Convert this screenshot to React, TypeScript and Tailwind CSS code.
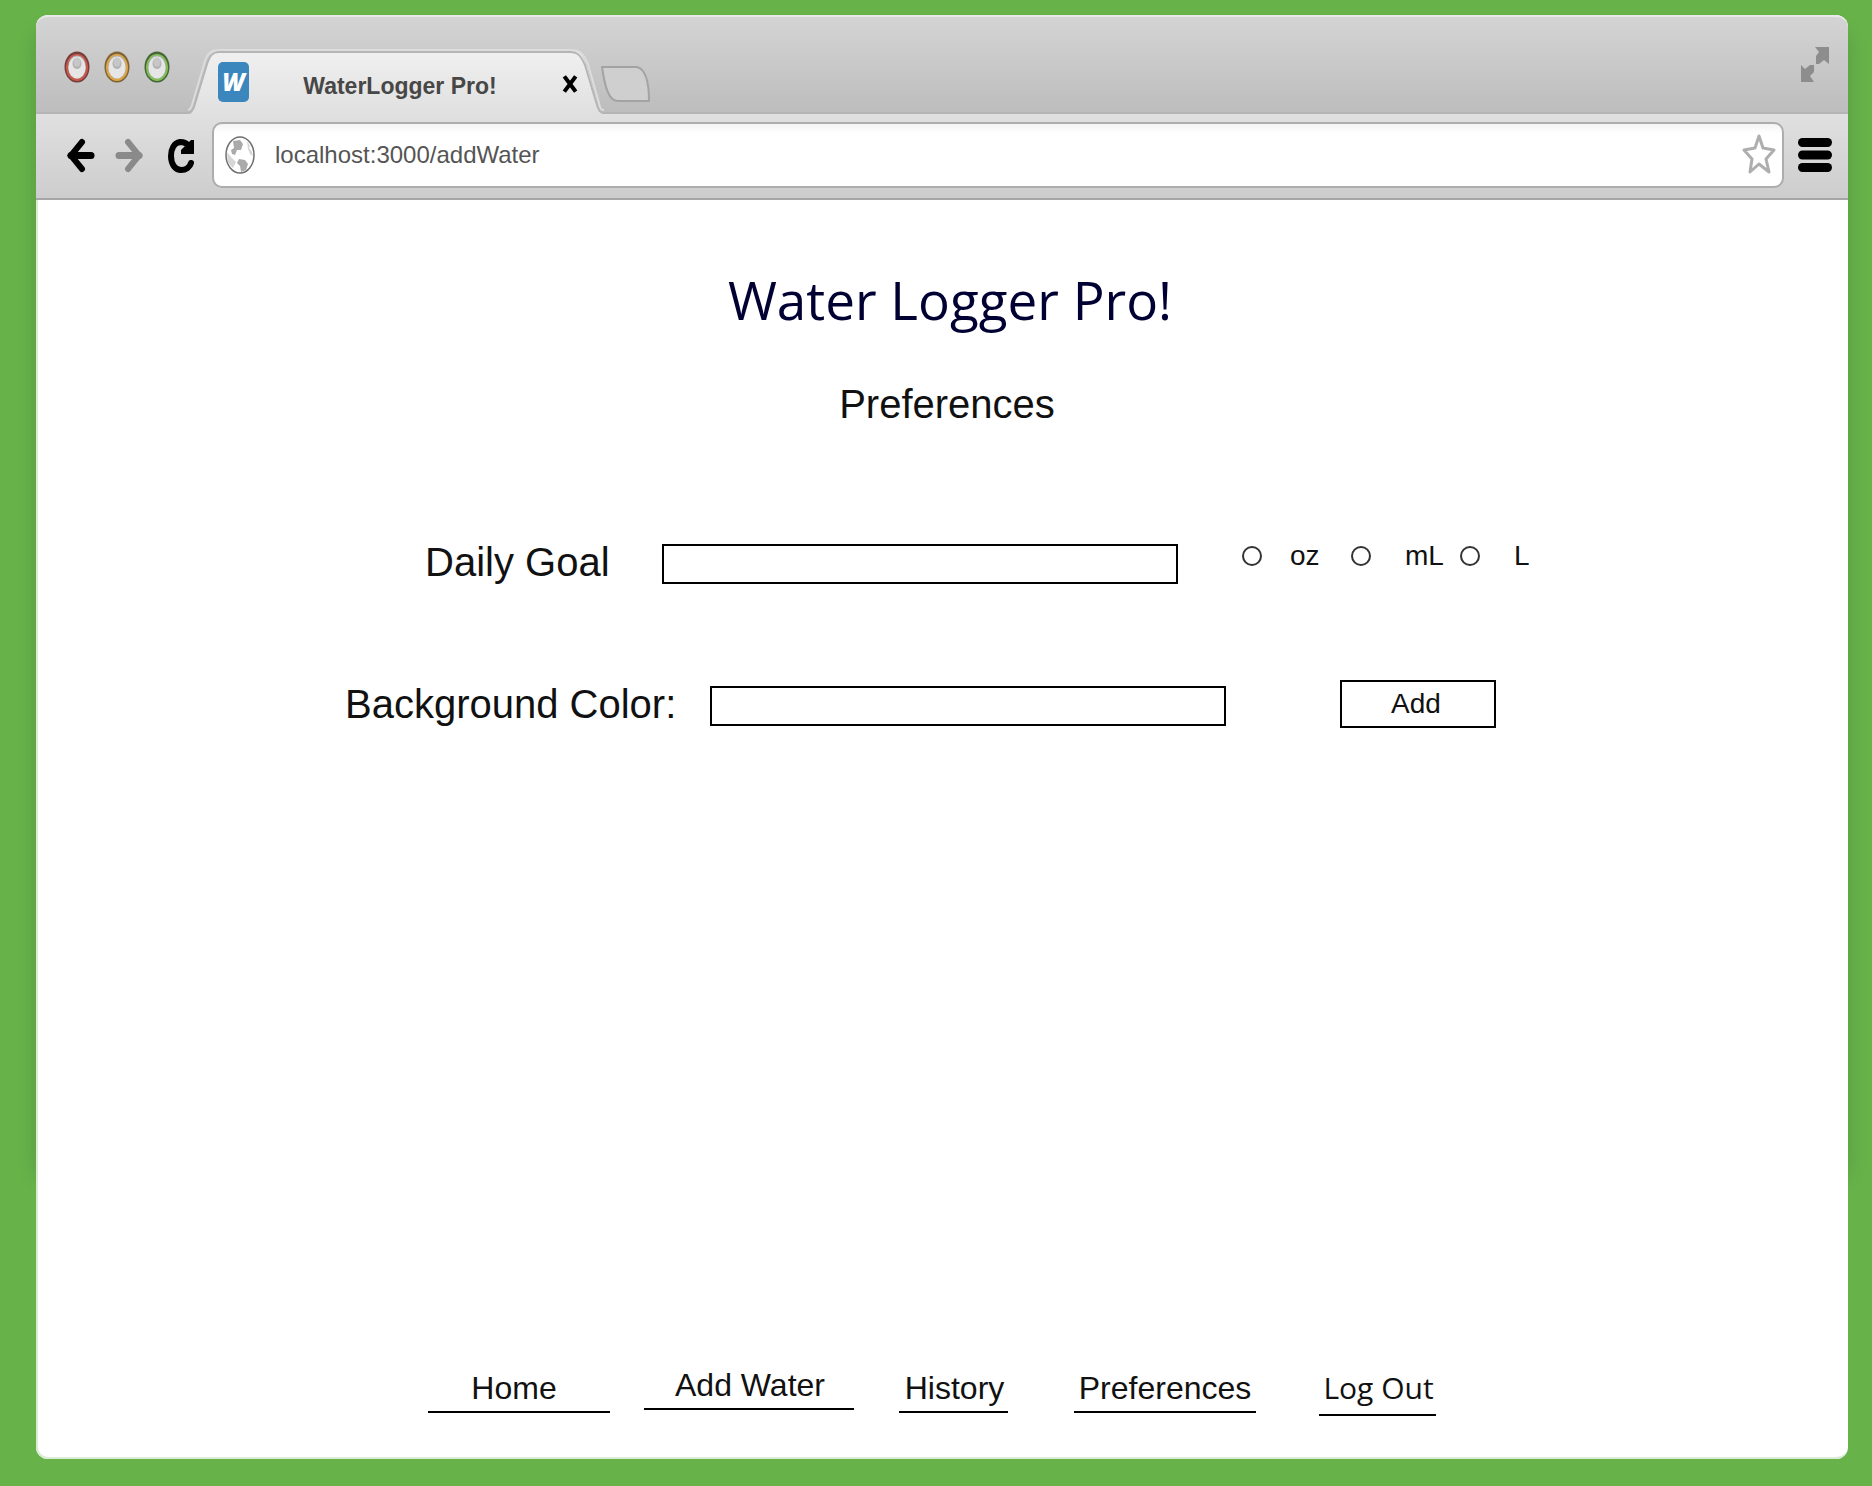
import React from "react";

const lights = [
  { name: "Close window", ring: "#c9584d", dark: "#5f1d18" },
  { name: "Minimize window", ring: "#dba548", dark: "#6d4a12" },
  { name: "Zoom window", ring: "#82bd5a", dark: "#254d12" },
];

function Light({ name, ring, dark }: { name: string; ring: string; dark: string }) {
  return (
    <button type="button" aria-label={name} className="block">
      <svg width="26" height="34" viewBox="0 0 26 34">
        <ellipse cx="13" cy="17" rx="12.500" ry="15.500" fill={dark} opacity="0.8" />
        <ellipse cx="13" cy="17.500" rx="11" ry="13.500" fill={ring} />
        <ellipse cx="13" cy="17" rx="9" ry="11.500" fill="#b3b3b3" />
        <ellipse cx="13" cy="17.500" rx="8.500" ry="11" fill="#e6e6e6" />
        <ellipse cx="13" cy="13.500" rx="4.500" ry="5.500" fill="#b4b4b4" />
        <ellipse cx="13" cy="12" rx="3.500" ry="4.500" fill="#c6c6c6" />
      </svg>
    </button>
  );
}

function TitleBar() {
  return (
    <div className="flex h-[97px] rounded-t-xl border-t-2 border-[#e8e8e8] bg-linear-to-b from-[#d4d4d4] to-[#bdbdbd]">
      <div className="flex w-[152px] shrink-0 items-start gap-[14px] pt-[33px] pl-7">
        {lights.map((l) => (
          <Light key={l.name} {...l} />
        ))}
      </div>
      <div className="relative z-10 mt-[32px] flex h-[66px] w-[416px] shrink-0 items-start self-start">
        <svg className="absolute inset-0" width="416" height="66" viewBox="0 0 416 66">
          <defs>
            <linearGradient id="tab" x1="0" y1="0" x2="0" y2="1">
              <stop offset="0" stopColor="#f0f0f0" />
              <stop offset="1" stopColor="#e0e0e0" />
            </linearGradient>
          </defs>
          <path d="M0 65 C3 65 4 62 6 58 L19 14 C22 4 25 1 31 1 H383 C391 1 394 5 398 15 L410 56 C412 62 413 65 416 65 V66 H0Z" fill="url(#tab)" />
          <path d="M0 61 C2 61 3 59 4 56 L17 12 C20 3 24 1 31 1 H383 C392 1 396 5 400 15 L411 54 C412 60 413 61 416 61" fill="none" stroke="#dcdcdc" strokeWidth="2" />
          <path d="M0 64 C3 64 4 62 6 58 L19 15 C22 6 25 3 31 3 H382 C390 3 393 7 397 16 L409 56 C411 62 412 64 416 64" fill="none" stroke="#b5b5b5" strokeWidth="2" />
        </svg>
        <span className="relative mt-[13px] ml-[30px] flex h-10 w-[31px] shrink-0 items-center justify-center rounded-[5px] bg-[#3b86bd]">
          <span className="font-['Open_Sans',sans-serif] text-2xl leading-8 font-extrabold text-white italic">W</span>
        </span>
        <span className="relative mt-5 flex-1 pr-2.5 text-center text-[23px] leading-[34px] font-bold whitespace-nowrap text-[#474747]">
          WaterLogger Pro!
        </span>
        <button type="button" aria-label="Close tab" className="relative mt-6 mr-[25px] h-[22px] w-[18px] shrink-0">
          <svg width="18" height="22" viewBox="0 0 18 22" stroke="#000" strokeWidth="4" strokeLinecap="square">
            <path d="M4.500 5 L13.500 17 M13.500 5 L4.500 17" />
          </svg>
        </button>
      </div>
      <button type="button" aria-label="New tab" className="mt-[48px] -ml-[5px] h-10 w-[52px] shrink-0">
        <svg width="52" height="40" viewBox="0 0 52 40">
          <path d="M3 2 H38 C46 4 50 17 50 36 H19 C10 36 6 23 3 2Z" fill="#cfcfcf" stroke="#a3a3a3" strokeWidth="2" strokeLinejoin="round" />
        </svg>
      </button>
      <button type="button" aria-label="Full screen" className="mt-[28px] mr-[17px] ml-auto h-10 w-8">
        <svg width="32" height="40" viewBox="0 0 32 40" fill="#8d8d8d">
          <path d="M16 2 H30 V19 L25 15 L20 19 H17 V11 L20 7Z" />
          <path d="M2 20 L6 24 L11 20 H15 V27 L11 31 L15 37 H2Z" />
        </svg>
      </button>
    </div>
  );
}

function Toolbar() {
  return (
    <div className="flex h-[88px] items-start border-t-2 border-b-2 border-t-[#b5b5b5] border-b-[#a6a6a6] bg-linear-to-b from-[#e0e0e0] to-[#cdcdcd] pt-2">
      <div className="flex w-[176px] shrink-0 gap-4 pt-4 pl-[30px]">
        <button type="button" aria-label="Back">
          <svg width="32" height="36" viewBox="0 0 32 36" fill="none" stroke="#000" strokeWidth="6">
            <path d="M16 4 L5 17.500 L16 31" strokeLinecap="round" strokeLinejoin="miter" />
            <path d="M5 17.500 H25" strokeWidth="7" strokeLinecap="round" />
          </svg>
        </button>
        <button type="button" aria-label="Forward">
          <svg width="32" height="36" viewBox="0 0 32 36" fill="none" stroke="#8a8a8a" strokeWidth="6">
            <path d="M14 4 L25 17.500 L14 31" strokeLinecap="round" strokeLinejoin="miter" />
            <path d="M5 17.500 H25" strokeWidth="7" strokeLinecap="round" />
          </svg>
        </button>
        <button type="button" aria-label="Reload" className="ml-1">
          <svg width="32" height="36" viewBox="0 0 32 36" fill="none">
            <path d="M23 8 C20 4 17 4 14 4 C8 5 5 11 5 18 C5 26 9 32 15 32 C20 32 24 29 25 25" stroke="#000" strokeWidth="6" strokeLinecap="round" />
            <path d="M28 2 V16 H15 V12 L25 2Z" fill="#000" />
          </svg>
        </button>
      </div>
      <div className="flex h-[66px] min-w-0 flex-1 items-center rounded-[10px] border-2 border-[#adadad] bg-linear-to-b from-[#f3f3f3] to-white to-15% pr-1.5 pl-2.5">
        <svg className="shrink-0" width="32" height="40" viewBox="0 0 32 40">
          <ellipse cx="16" cy="20" rx="14" ry="18" fill="#fff" stroke="#6f6f6f" strokeWidth="1.500" />
          <path d="M9 6 L16 5 L19 9 L17 15 L13 15 L11 20 L8 19 L7 15 L10 13Z" fill="#aaa" />
          <path d="M3 17 L7 22 L12 27 L9 33 L4 28Z M23 6 L26 11 L25 13 L28 17 L29 21 L26 19 L24 14Z" fill="#d6d6d6" />
          <path d="M15 24 L21 25 L24 29 L22 35 L17 37 L16 31 L13 28Z" fill="#aaa" />
        </svg>
        <input
          type="text"
          aria-label="Address"
          defaultValue="localhost:3000/addWater"
          className="ml-[19px] min-w-0 flex-1 bg-transparent text-2xl text-[#555555] outline-none"
        />
        <button type="button" aria-label="Bookmark this page" className="mb-0.5 shrink-0">
          <svg width="34" height="42" viewBox="0 0 34 42">
            <path d="M17 3 L21 15 L32 17 L24 26 L27 39 L17 31 L8 39 L10 26 L2 17 L13 15Z" fill="#fff" stroke="#aeaeae" strokeWidth="3" strokeLinejoin="round" />
          </svg>
        </button>
      </div>
      <button type="button" aria-label="Menu" className="mt-4 mr-4 ml-3.5 shrink-0">
        <svg width="34" height="36" viewBox="0 0 34 36">
          <rect y="0" width="34" height="9" rx="4.500" />
          <rect y="12.500" width="34" height="9" rx="4.500" />
          <rect y="25" width="34" height="9" rx="4.500" />
        </svg>
      </button>
    </div>
  );
}

const radio = "size-5 shrink-0 appearance-none rounded-full border-2 border-[#333333] bg-white checked:bg-black checked:shadow-[inset_0_0_0_3px_white]";
const field = "h-10 min-w-0 flex-1 border-2 border-black bg-white px-2 text-2xl outline-none";

export default function App() {
  return (
    <div className="flex min-h-screen bg-[#67b34a] pt-[15px] pr-6 pb-[27px] pl-9 font-['Liberation_Sans',sans-serif] text-[#111111]">
      <div className="relative flex min-w-0 flex-1 flex-col">
        <div className="absolute inset-x-0 top-4 bottom-[280px] rounded-xl shadow-[0_0_20px_rgba(0,0,0,0.15)]" />
        <div className="relative flex flex-1 flex-col rounded-xl bg-white">
          <header>
            <TitleBar />
            <Toolbar />
          </header>
          <main className="flex flex-1 flex-col rounded-b-xl border-b-2 border-l-2 border-[#dcebd6] pt-16 pb-[41px]">
            <div className="pl-2 text-center">
              <h1 className="pl-1.5 font-['Open_Sans',sans-serif] text-[53px] leading-[72px] text-[#000033]">Water Logger Pro!</h1>
              <h2 className="mt-11 text-[40px] leading-[48px]">Preferences</h2>
            </div>
            <form className="mt-28 flex flex-col gap-24" onSubmit={(e) => e.preventDefault()}>
              <div className="flex items-end pr-[316px] pl-[387px]">
                <label htmlFor="goal" className="w-[237px] shrink-0 text-[40px] leading-[44px]">Daily Goal</label>
                <input id="goal" type="text" className={field} />
                <div role="radiogroup" aria-label="Unit" className="ml-16 flex w-[290px] shrink-0 self-start text-[28px] leading-8">
                  <label className="flex w-[109px] items-center gap-7">
                    <input type="radio" name="unit" className={radio} />
                    oz
                  </label>
                  <label className="flex w-[109px] items-center gap-[34px]">
                    <input type="radio" name="unit" className={radio} />
                    mL
                  </label>
                  <label className="flex items-center gap-[34px]">
                    <input type="radio" name="unit" className={radio} />
                    L
                  </label>
                </div>
              </div>
              <div className="flex items-end pr-[352px] pl-[307px]">
                <label htmlFor="color" className="w-[365px] shrink-0 text-[40px] leading-[44px]">Background Color:</label>
                <input id="color" type="text" className={field} />
                <button type="submit" className="-mb-0.5 ml-[114px] h-12 w-[156px] shrink-0 border-2 border-black bg-white pr-1 text-[28px] leading-9">
                  Add
                </button>
              </div>
            </form>
            <nav className="mt-auto flex h-[49px] items-center pl-[390px] text-[32px] leading-9 whitespace-nowrap *:border-b-2 *:border-black *:text-center">
              <a href="#home" className="w-[182px] pr-2.5 pb-[5px]">Home</a>
              <a href="#add-water" className="ml-[34px] w-[210px] self-start pb-[5px] pl-0.5">Add Water</a>
              <a href="#history" className="ml-[45px] w-[109px] pb-[5px] pl-0.5">History</a>
              <a href="#preferences" className="ml-[66px] w-[182px] pb-[5px]">Preferences</a>
              <a href="#log-out" className="ml-[63px] w-[117px] self-end pb-[11px] pl-0.5 font-['Open_Sans',sans-serif] text-[30px] leading-[30px]">Log Out</a>
            </nav>
          </main>
        </div>
      </div>
    </div>
  );
}
